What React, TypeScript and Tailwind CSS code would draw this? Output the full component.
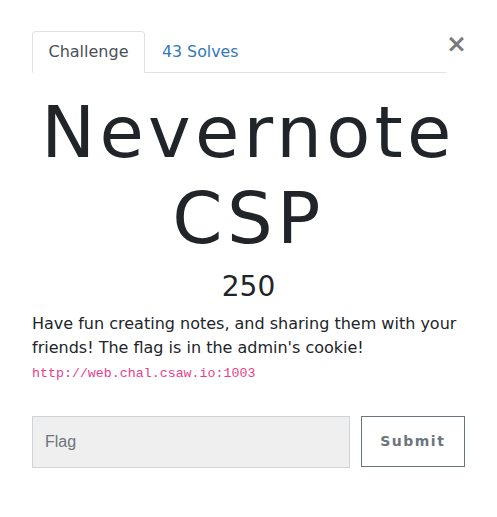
import React from 'react';

const App: React.FC = () => {
  return (
    <div className="min-h-[517px] w-full bg-white font-['DejaVu_Sans',sans-serif] text-[#212529]">
      <div className="px-[32px] pt-[31px]">
        <div className="flex items-start">
          <div className="flex w-[414px] shrink-0 border-b border-[#dee2e6]">
            <button className="-mb-px rounded-t-[4px] border border-[#dee2e6] border-b-white bg-white px-[15.5px] py-2 text-base leading-6 text-[#495057]">
              Challenge
            </button>
            <button className="-mb-px border border-transparent px-4 py-2 text-[15.8px] leading-6 text-[#337ab7]">
              43 Solves
            </button>
          </div>
          <button className="ml-auto mt-0 mr-[1px] text-[25px] font-bold leading-none text-[#7a7a7a]">
            ×
          </button>
        </div>

        <h1 className="mt-[16px] mb-[8px] text-center text-[72px] font-normal leading-[1.2] tracking-[4.3px]">
          Nevernote
          <br />
          CSP
        </h1>
        <h3 className="mb-[9px] text-center text-[28px] font-normal leading-[1.2]">250</h3>

        <div className="text-base leading-6">
          Have fun creating notes, and sharing them with your friends! The flag is in the admin's cookie!
          <code className="mt-[2px] block font-['Liberation_Mono',monospace] text-[13.3px] leading-6 text-[#e83e8c]">
            http://web.chal.csaw.io:1003
          </code>
        </div>

        <div className="mt-[30px] flex items-start gap-[11px]">
          <input
            placeholder="Flag"
            className="h-[52px] w-[319px] border border-[#ced4da] bg-[#efefef] px-3 font-['Liberation_Sans',sans-serif] text-base text-[#495057] placeholder:text-[#6c757d] outline-none"
          />
          <button className="h-[51px] w-[105px] border border-[#6c757d] bg-white text-[14px] font-bold tracking-[1.5px] text-[#6c757d]">
            Submit
          </button>
        </div>
      </div>
    </div>
  );
};

export default App;
